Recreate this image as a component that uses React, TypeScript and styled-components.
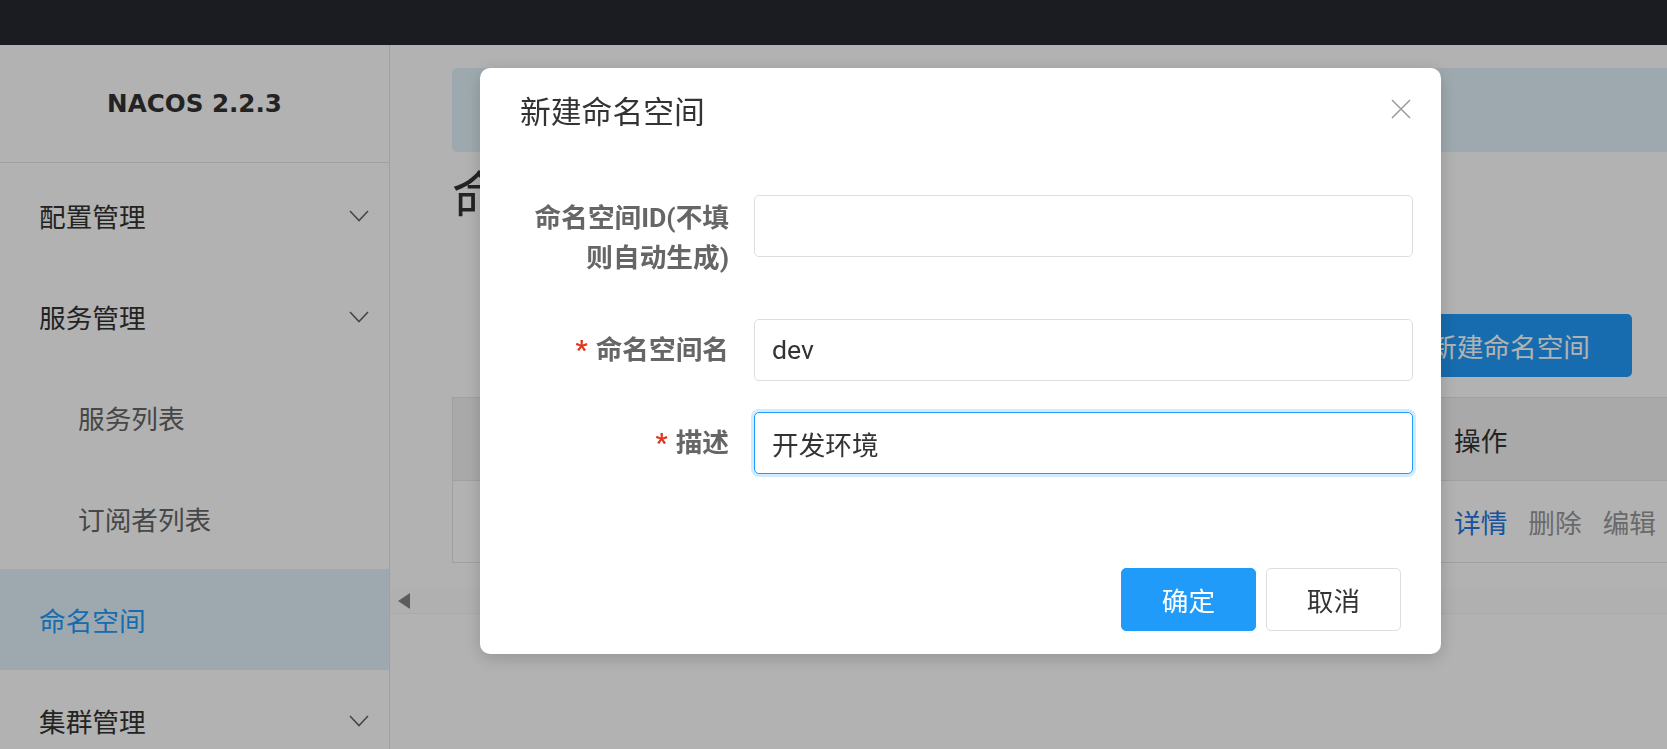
import styled, { createGlobalStyle } from "styled-components";

const GlobalStyle = createGlobalStyle`
  html, body {
    margin: 0;
    padding: 0;
    height: 749px;
    overflow: hidden;
    background: #fff;
    font-family: Roboto, "Noto Sans CJK SC", sans-serif;
    color: #333;
  }
  * { box-sizing: border-box; }
`;

const Page = styled.div`
  display: flex;
  flex-direction: column;
  height: 749px;
`;

const TopBar = styled.header`
  height: 45px;
  flex-shrink: 0;
  background: #272931;
`;

const Body = styled.div`
  display: flex;
  flex: 1;
  min-height: 0;
`;

const Sidebar = styled.aside`
  width: 390px;
  flex-shrink: 0;
  background: #fff;
  border-right: 1px solid #e6e6e6;
`;

const Logo = styled.div`
  height: 118px;
  border-bottom: 1px solid #e6e6e6;
  display: flex;
  align-items: center;
  justify-content: center;
  font-family: "DejaVu Sans", sans-serif;
  font-weight: 700;
  font-size: 24.6px;
  color: #333;
`;

const Menu = styled.nav`
  padding-top: 2px;
`;

const MenuItem = styled.div<{ $sub?: boolean; $active?: boolean }>`
  height: 101px;
  display: flex;
  align-items: center;
  justify-content: space-between;
  padding: 0 20px 0 ${(p) => (p.$sub ? 78 : 39)}px;
  font-size: 26.67px;
  color: ${(p) => (p.$active ? "#209bfa" : p.$sub ? "#666" : "#333")};
  background: ${(p) => (p.$active ? "#e3f3fb" : "transparent")};
`;

const Main = styled.main`
  flex: 1;
  min-width: 0;
  overflow: hidden;
  display: flex;
  flex-direction: column;
`;

const Content = styled.div`
  padding: 23px 35px 26px 62px;
`;

const InfoBox = styled.div`
  height: 84px;
  margin-right: -60px;
  border-radius: 5px;
  background: #e3f3fb;
`;

const PageTitle = styled.h1`
  margin: 18px 0 0;
  font-size: 53px;
  line-height: 56px;
  font-weight: 400;
  color: #333;
`;

const Toolbar = styled.div`
  display: flex;
  justify-content: flex-end;
  margin-top: 88px;
`;

const PrimaryButton = styled.button`
  height: 63px;
  padding: 0 42px;
  border: 0;
  border-radius: 5px;
  background: #209bfa;
  color: #fff;
  font-family: inherit;
  font-size: 26.67px;
`;

const Table = styled.div`
  margin-top: 20px;
  margin-right: -60px;
  border-left: 1px solid #e5e5e5;
  border-top: 1px solid #e5e5e5;
`;

const TableRow = styled.div<{ $head?: boolean }>`
  display: grid;
  grid-template-columns: repeat(3, 1fr) 254px;
  height: ${(p) => (p.$head ? 83 : 82)}px;
  border-bottom: 1px solid #e5e5e5;
  background: ${(p) => (p.$head ? "#f3f3f3" : "#fff")};
`;

const Cell = styled.div`
  display: flex;
  align-items: center;
  gap: 21px;
  padding: 0 16px 0 32px;
  font-size: 26.67px;
  color: #333;
  &:last-child {
    padding-left: 16px;
  }
`;

const Link = styled.span<{ $muted?: boolean }>`
  color: ${(p) => (p.$muted ? "#999" : "#2677de")};
`;

const ScrollStrip = styled.div`
  height: 25px;
  display: flex;
  align-items: center;
  padding-left: 8px;
  background: #fcfcfc;
  border-bottom: 1px solid #f4f4f4;
`;

const ArrowLeft = styled.div`
  width: 0;
  height: 0;
  border-top: 8px solid transparent;
  border-bottom: 8px solid transparent;
  border-right: 12px solid #858585;
`;

const Mask = styled.div`
  position: fixed;
  inset: 0;
  background: rgba(0, 0, 0, 0.3);
  display: flex;
  align-items: flex-start;
  padding: 68px 0 0 480px;
`;

const Dialog = styled.div`
  position: relative;
  width: 961px;
  height: 586px;
  background: #fff;
  border-radius: 10px;
  box-shadow: 0 4px 18px rgba(0, 0, 0, 0.18);
  display: flex;
  flex-direction: column;
`;

const DialogHeader = styled.div`
  padding: 24px 40px 0;
  font-size: 30.8px;
  line-height: 42px;
  color: #333;
`;

const CloseButton = styled.button`
  position: absolute;
  top: 31px;
  right: 30px;
  width: 20px;
  height: 20px;
  padding: 0;
  border: 0;
  background: transparent;
  display: flex;
`;

const DialogBody = styled.div`
  padding: 61px 28px 0 40px;
  display: flex;
  flex-direction: column;
  gap: 31px;
`;

const FormItem = styled.div`
  display: flex;
  align-items: flex-start;
`;

const Label = styled.label<{ $multi?: boolean }>`
  width: 209px;
  margin-right: 25px;
  flex-shrink: 0;
  text-align: right;
  font-size: 26.67px;
  font-weight: 700;
  color: #666;
  line-height: ${(p) => (p.$multi ? "40px" : "62px")};
  padding: ${(p) => (p.$multi ? "3px 0 10px" : "0")};
`;

const Required = styled.span`
  color: #e0361f;
  margin-right: 8px;
`;

const Input = styled.input<{ $focused?: boolean }>`
  width: 659px;
  height: 62px;
  padding: 0 17px;
  border: 1px solid ${(p) => (p.$focused ? "#209bfa" : "#dcdee3")};
  border-radius: 5px;
  box-shadow: ${(p) => (p.$focused ? "0 0 0 3px rgba(32, 155, 250, 0.2)" : "none")};
  font-family: Roboto, "Noto Sans CJK SC", sans-serif;
  font-size: 26.67px;
  color: #333;
  outline: none;
  background: #fff;
`;

const DialogFooter = styled.div`
  display: flex;
  justify-content: flex-end;
  gap: 10px;
  padding: 94px 40px 23px;
`;

const DialogButton = styled.button<{ $primary?: boolean }>`
  width: 135px;
  height: 63px;
  border-radius: 5px;
  border: 1px solid ${(p) => (p.$primary ? "#209bfa" : "#dcdee3")};
  background: ${(p) => (p.$primary ? "#209bfa" : "#fff")};
  color: ${(p) => (p.$primary ? "#fff" : "#333")};
  font-family: inherit;
  font-size: 26.67px;
`;

const Chevron = () => (
  <svg width="20" height="12" viewBox="0 0 20 12">
    <polyline points="1,1 10,10.5 19,1" fill="none" stroke="#666" strokeWidth="1.6" />
  </svg>
);

const menu = [
  { label: "配置管理", arrow: true },
  { label: "服务管理", arrow: true },
  { label: "服务列表", sub: true },
  { label: "订阅者列表", sub: true },
  { label: "命名空间", active: true },
  { label: "集群管理", arrow: true },
];

export default function App() {
  return (
    <Page>
      <GlobalStyle />
      <TopBar />
      <Body>
        <Sidebar>
          <Logo>NACOS 2.2.3</Logo>
          <Menu>
            {menu.map((m) => (
              <MenuItem key={m.label} $sub={m.sub} $active={m.active}>
                <span>{m.label}</span>
                {m.arrow && <Chevron />}
              </MenuItem>
            ))}
          </Menu>
        </Sidebar>
        <Main>
          <Content>
            <InfoBox />
            <PageTitle>命名空间</PageTitle>
            <Toolbar>
              <PrimaryButton>新建命名空间</PrimaryButton>
            </Toolbar>
            <Table>
              <TableRow $head>
                <Cell>命名空间名称</Cell>
                <Cell>命名空间ID</Cell>
                <Cell>配置数</Cell>
                <Cell>操作</Cell>
              </TableRow>
              <TableRow>
                <Cell>public(保留空间)</Cell>
                <Cell></Cell>
                <Cell>0</Cell>
                <Cell>
                  <Link>详情</Link>
                  <Link $muted>删除</Link>
                  <Link $muted>编辑</Link>
                </Cell>
              </TableRow>
            </Table>
          </Content>
          <ScrollStrip>
            <ArrowLeft />
          </ScrollStrip>
        </Main>
      </Body>

      <Mask>
        <Dialog>
          <DialogHeader>新建命名空间</DialogHeader>
          <CloseButton aria-label="close">
            <svg width="20" height="20" viewBox="0 0 20 20">
              <path d="M1 1 L19 19 M19 1 L1 19" stroke="#999" strokeWidth="1.5" />
            </svg>
          </CloseButton>
          <DialogBody>
            <FormItem>
              <Label $multi>命名空间ID(不填则自动生成)</Label>
              <Input defaultValue="" />
            </FormItem>
            <FormItem>
              <Label>
                <Required>*</Required>命名空间名
              </Label>
              <Input defaultValue="dev" />
            </FormItem>
            <FormItem>
              <Label>
                <Required>*</Required>描述
              </Label>
              <Input $focused defaultValue="开发环境" />
            </FormItem>
          </DialogBody>
          <DialogFooter>
            <DialogButton $primary>确定</DialogButton>
            <DialogButton>取消</DialogButton>
          </DialogFooter>
        </Dialog>
      </Mask>
    </Page>
  );
}
